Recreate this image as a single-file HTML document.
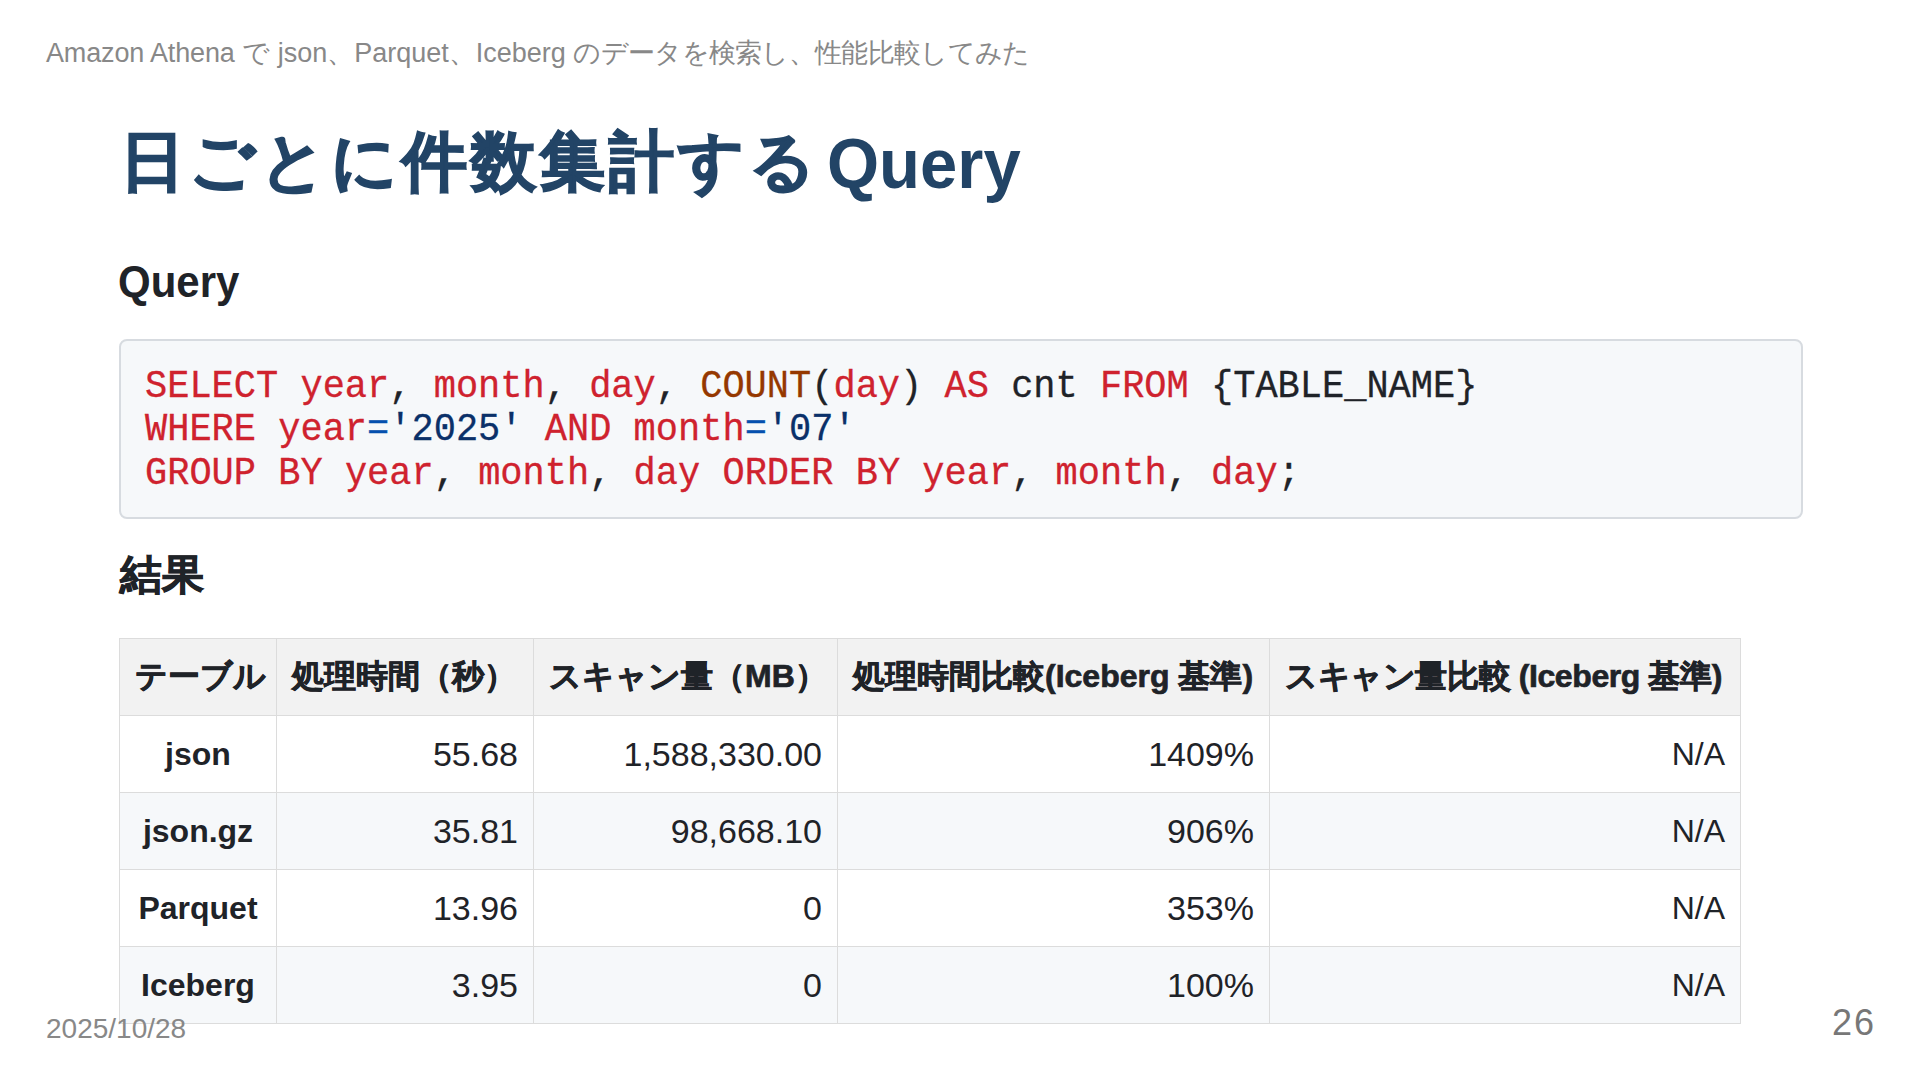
<!DOCTYPE html>
<html lang="ja">
<head>
<meta charset="utf-8">
<style>
*{margin:0;padding:0;box-sizing:border-box}
html,body{width:1920px;height:1080px;overflow:hidden;background:#fff}
body{font-family:"Liberation Sans",sans-serif;color:#1f2328;position:relative}
.hdr{position:absolute;left:46px;top:35px;font-size:27px;line-height:36px;color:#888;white-space:nowrap}
.ftr{position:absolute;left:46px;top:1011px;font-size:28px;line-height:36px;color:#888;white-space:nowrap;z-index:5}
.pg{position:absolute;right:44px;top:1003px;letter-spacing:2px;font-size:36px;line-height:40px;color:#777;z-index:5}
h1{position:absolute;left:120px;top:119px;font-size:69px;line-height:84px;font-weight:bold;color:#224466;white-space:nowrap}
h1 .j{font-size:65px;letter-spacing:4px;-webkit-text-stroke:1.6px #224466}
h1 .q{font-size:67px;margin-left:7px;display:inline-block;transform:translateY(3.5px) scaleY(1.06);transform-origin:0 62px}
.jh{font-size:42px;left:120px!important;letter-spacing:0px;-webkit-text-stroke:0.8px #1f2328}
h2{position:absolute;left:118px;font-size:44px;line-height:56px;font-weight:bold;color:#1f2328;white-space:nowrap}
.code{position:absolute;left:119px;top:339px;width:1684px;height:180px;background:#f6f8fa;border:2px solid #d7dbe0;border-radius:8px}
.code pre{position:absolute;left:24px;top:24px;transform:scaleY(1.07);transform-origin:0 0;-webkit-text-stroke:0.3px currentColor;font-family:"Liberation Mono",monospace;font-size:37px;line-height:40.28px;color:#1f2328;white-space:pre}
.k{color:#cf222e}.b{color:#953800}.s{color:#0a3069}.o{color:#0550ae}
table{position:absolute;left:119px;top:638px;width:1622px;border-collapse:collapse;table-layout:fixed;font-size:32px}
td,th{border:1px solid #dcdcdc;height:77px;padding:0 15px;white-space:nowrap}
th{background:#f2f2f2;font-weight:bold;text-align:left}
td{text-align:right}
td.c{text-align:center;font-weight:bold}
td.n{font-size:34px}
th{-webkit-text-stroke:0.7px #1f2328}
tr.e td{background:#f6f8fa}
</style>
</head>
<body>
<div class="hdr"><span style="letter-spacing:-0.15px">Amazon Athena</span> で json、Parquet、Iceberg <span style="letter-spacing:-0.7px">のデータを検索し、性能比較してみた</span></div>
<h1><span class="j">日ごとに件数集計する</span><span class="q">Query</span></h1>
<h2 style="top:255px;font-size:42px;transform:scaleY(1.07);transform-origin:0 42px">Query</h2>
<div class="code"><pre><span class="k">SELECT</span> <span class="k">year</span>, <span class="k">month</span>, <span class="k">day</span>, <span class="b">COUNT</span>(<span class="k">day</span>) <span class="k">AS</span> cnt <span class="k">FROM</span> {TABLE_NAME}
<span class="k">WHERE</span> <span class="k">year</span><span class="o">=</span><span class="s">'2025'</span> <span class="k">AND</span> <span class="k">month</span><span class="o">=</span><span class="s">'07'</span>
<span class="k">GROUP</span> <span class="k">BY</span> <span class="k">year</span>, <span class="k">month</span>, <span class="k">day</span> <span class="k">ORDER</span> <span class="k">BY</span> <span class="k">year</span>, <span class="k">month</span>, <span class="k">day</span>;</pre></div>
<h2 class="jh" style="top:547px">結果</h2>
<table>
<colgroup><col style="width:157px"><col style="width:257px"><col style="width:304px"><col style="width:432px"><col style="width:471px"></colgroup>
<tr><th>テーブル</th><th>処理時間（秒）</th><th>スキャン量（MB）</th><th>処理時間比較(Iceberg 基準)</th><th style="letter-spacing:-0.4px">スキャン量比較 (Iceberg 基準)</th></tr>
<tr><td class="c">json</td><td class="n">55.68</td><td class="n">1,588,330.00</td><td class="n">1409%</td><td>N/A</td></tr>
<tr class="e"><td class="c">json.gz</td><td class="n">35.81</td><td class="n">98,668.10</td><td class="n">906%</td><td>N/A</td></tr>
<tr><td class="c">Parquet</td><td class="n">13.96</td><td class="n">0</td><td class="n">353%</td><td>N/A</td></tr>
<tr class="e"><td class="c">Iceberg</td><td class="n">3.95</td><td class="n">0</td><td class="n">100%</td><td>N/A</td></tr>
</table>
<div class="ftr">2025/10/28</div>
<div class="pg">26</div>
</body>
</html>
